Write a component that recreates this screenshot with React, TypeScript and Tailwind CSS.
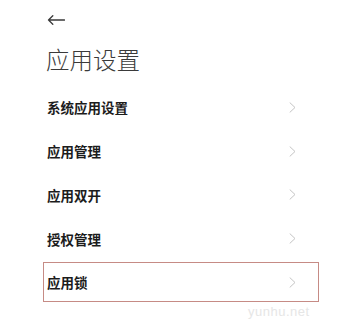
import React from "react";

const items = ["系统应用设置", "应用管理", "应用双开", "授权管理", "应用锁"];

function Chevron() {
  return (
    <svg width="7" height="11" viewBox="0 0 7 11" fill="none">
      <path d="M1 0.8 L6 5.5 L1 10.2" stroke="#c4c4c4" strokeWidth="1" strokeLinecap="round" strokeLinejoin="round" />
    </svg>
  );
}

export default function App() {
  return (
    <div
      className="relative w-[348px] h-[329px] bg-white overflow-hidden"
      style={{ fontFamily: '"Noto Sans CJK SC", "Noto Sans", sans-serif' }}
    >
      <div className="pl-[47px] pt-[15px] h-[48px]">
        <svg width="18" height="10" viewBox="0 0 18 10" fill="none">
          <path d="M1.5 5 H17.5 M5.8 0.8 L1.5 5 L5.8 9.2" stroke="#3a3a3a" strokeWidth="1.3" strokeLinecap="round" strokeLinejoin="round" />
        </svg>
      </div>
      <div className="pl-[46px] h-[37.5px] flex items-start">
        <span className="text-[23.5px] leading-[23px] font-light text-[#3a3a3a]">应用设置</span>
      </div>
      <div className="pl-[43px] pr-[29px]">
        {items.map((t, i) => {
          const last = i === items.length - 1;
          return (
            <div key={t} className="h-[43.75px] flex flex-col justify-center">
              <div
                className={
                  "flex items-center justify-between pl-[3px] pr-[22px] " +
                  (last ? "h-[40px] border border-[#c68b85]" : "h-[40px] border border-transparent")
                }
              >
                <span className="text-[13.5px] font-semibold text-[#1c1c1c]">{t}</span>
                <Chevron />
              </div>
            </div>
          );
        })}
      </div>
      <div className="absolute left-[248px] top-[302px] text-[13px] text-[#e6e6e6] tracking-[0.5px]" style={{ fontFamily: '"Liberation Sans", sans-serif' }}>
        yunhu.net
      </div>
    </div>
  );
}
